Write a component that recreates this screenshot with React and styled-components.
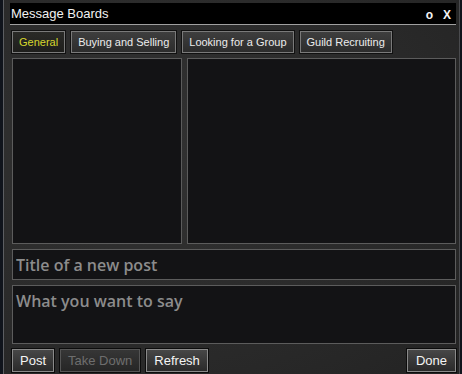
import React from 'react';
import styled, { createGlobalStyle } from 'styled-components';

const GlobalStyle = createGlobalStyle`
    html, body {
        margin: 0;
        background: #10141c;
        overflow: hidden;
    }
`;

const tabs = ['General', 'Buying and Selling', 'Looking for a Group', 'Guild Recruiting'];

const App = () => (
    <>
        <GlobalStyle />
        <Window>
            <TitleBar>
                <TitleText>Message Boards</TitleText>
                <TitleActions>
                    <TitleAction>o</TitleAction>
                    <TitleAction>X</TitleAction>
                </TitleActions>
            </TitleBar>
            <Content>
                <TabRow>
                    {tabs.map((t, i) => (
                        <Tab key={t} $active={i === 0}>{t}</Tab>
                    ))}
                </TabRow>
                <PanelRow>
                    <Panel $width="170px" />
                    <Panel />
                </PanelRow>
                <TitleInput placeholder="Title of a new post" />
                <BodyInput placeholder="What you want to say" />
                <ButtonRow>
                    <Button>Post</Button>
                    <Button disabled>Take Down</Button>
                    <Button>Refresh</Button>
                    <Spacer />
                    <Button $wide>Done</Button>
                </ButtonRow>
            </Content>
        </Window>
    </>
);

const Window = styled.div`
    box-sizing: border-box;
    margin-left: 3px;
    width: 457px;
    height: 380px;
    padding-top: 3px;
    border-left: 1px solid #5c5e62;
    border-right: 1px solid #4a4b4e;
    background: radial-gradient(ellipse at 30% 40%, #323232 0%, #2a2a2a 60%, #232323 100%);
    font-family: 'Liberation Sans', Arial, sans-serif;
`;

const TitleBar = styled.div`
    display: flex;
    align-items: center;
    justify-content: space-between;
    height: 21px;
    margin: 0 3px 0 6px;
    padding: 0 5px 0 1px;
    background: #000;
    border-bottom: 1px solid #a0a0a0;
`;

const TitleText = styled.span`
    color: #f2f2f2;
    font-size: 13px;
`;

const TitleActions = styled.div`
    display: flex;
    gap: 10px;
    padding-top: 2px;
`;

const TitleAction = styled.span`
    color: #f4f4f4;
    font-size: 12px;
    font-weight: bold;
`;

const Content = styled.div`
    display: flex;
    flex-direction: column;
    gap: 5px;
    padding: 0 3px 0 8px;
`;

const TabRow = styled.div`
    display: flex;
    gap: 6px;
    margin-top: 6px;
`;

const Tab = styled.div`
    display: flex;
    align-items: center;
    height: 22px;
    padding: 0 6px;
    box-sizing: border-box;
    font-size: 11px;
    color: ${p => (p.$active ? '#d6d62c' : '#ececec')};
    background: ${p => (p.$active
        ? 'linear-gradient(#2a2a27, #1e1e1c)'
        : 'linear-gradient(#3e3e3e, #2c2c2c)')};
    border: 1px solid #7a7a7a;
    box-shadow: 0 0 0 1px #111;
`;

const PanelRow = styled.div`
    display: flex;
    gap: 5px;
    height: 186px;
`;

const Panel = styled.div`
    box-sizing: border-box;
    flex: ${p => (p.$width ? `0 0 ${p.$width}` : '1')};
    background: #131315;
    border: 1px solid #5c5c5c;
`;

const fieldStyle = `
    box-sizing: border-box;
    width: 100%;
    margin: 0;
    background: #131315;
    border: 1px solid #5c5c5c;
    outline: none;
    font-family: 'Open Sans', 'Noto Sans', sans-serif;
    font-size: 16px;
    font-weight: 600;
    color: #d0d0d0;
    &::placeholder {
        color: #8c8c8c;
    }
`;

const TitleInput = styled.input`
    ${fieldStyle}
    height: 31px;
    padding: 0 3px;
`;

const BodyInput = styled.textarea`
    ${fieldStyle}
    display: block;
    height: 59px;
    resize: none;
    padding: 4px 3px;
    line-height: 22px;
`;

const ButtonRow = styled.div`
    display: flex;
    gap: 6px;
    height: 23px;
`;

const Spacer = styled.div`
    flex: 1;
`;

const Button = styled.button`
    box-sizing: border-box;
    height: 23px;
    margin: 0;
    padding: 0 ${p => (p.$wide ? '8px' : '7px')};
    font-family: 'Liberation Sans', Arial, sans-serif;
    font-size: 13px;
    color: #f4f4f4;
    background: linear-gradient(#474747, #2a2a2a);
    border: 1px solid #8a8a8a;
    box-shadow: 0 0 0 1px #0c0c0c;
    cursor: pointer;
    &:disabled {
        color: #6e6e6e;
        border-color: #555;
        background: linear-gradient(#363636, #262626);
    }
`;

export default App;
